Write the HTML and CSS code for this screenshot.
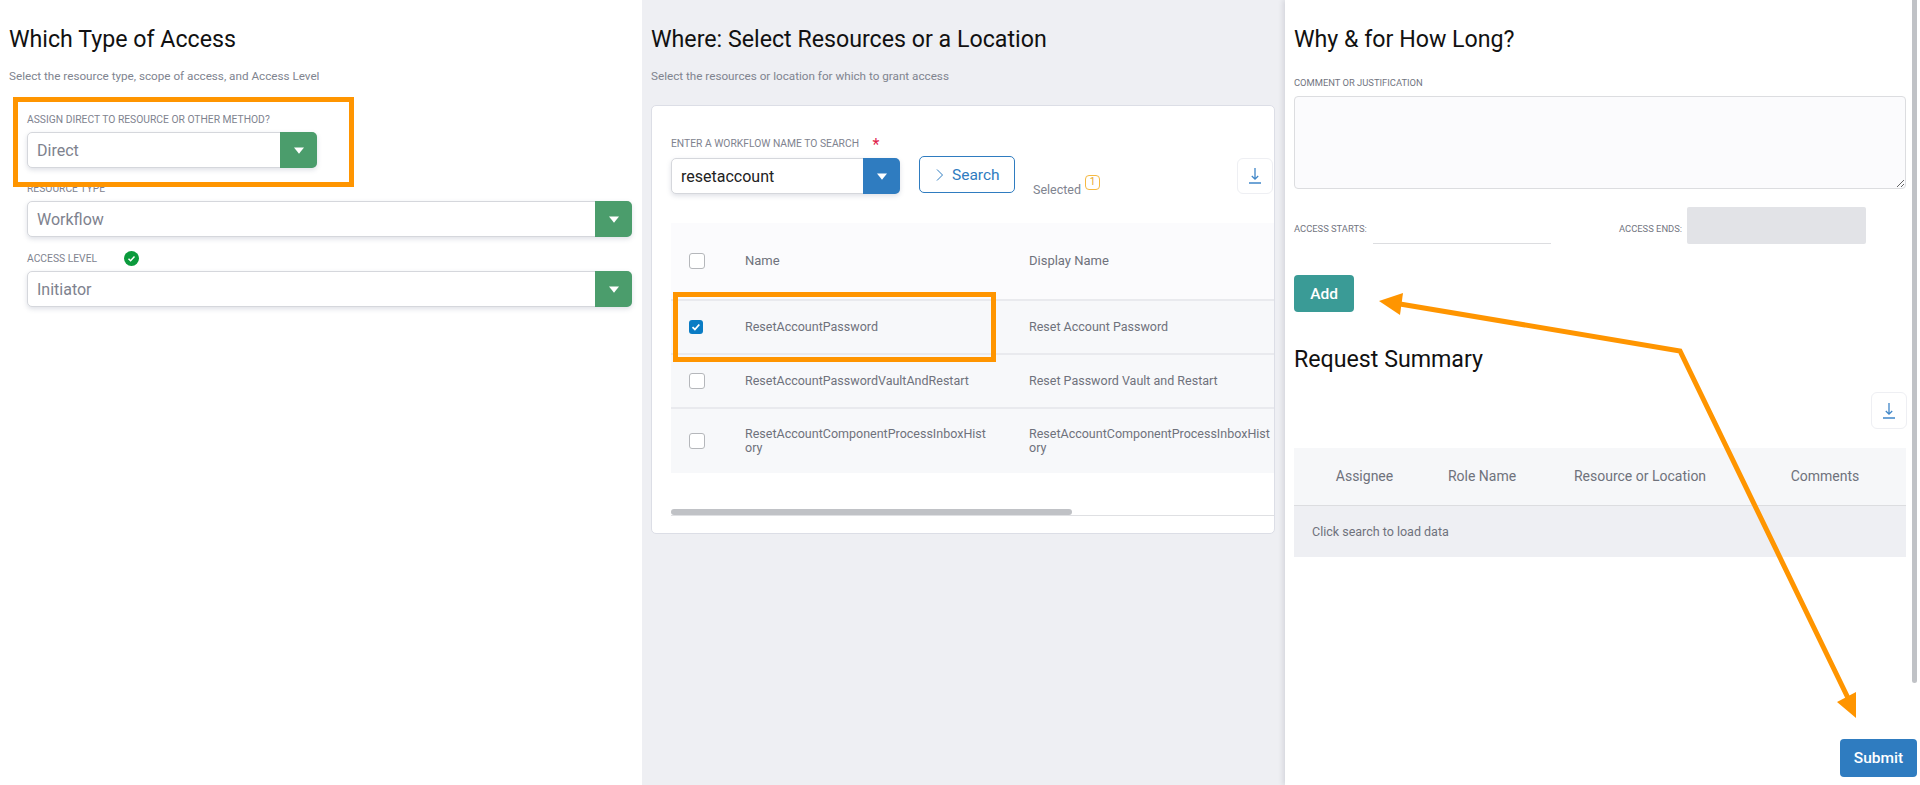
FILE: index.html
```html
<!DOCTYPE html>
<html lang="en">
<head>
    <meta charset="UTF-8">
    <meta name="viewport" content="width=device-width, initial-scale=1.0">
    <title>Request Access</title>
    <link rel="stylesheet" href="styles.css">
</head>
<body>
    <div class="page">
        <section class="panel panel-type">
            <h1>Which Type of Access</h1>
            <p class="subtitle">Select the resource type, scope of access, and Access Level</p>
            <div class="type-form">
                <div class="form-group">
                    <div class="field-label">ASSIGN DIRECT TO RESOURCE OR OTHER METHOD?</div>
                    <div class="select select-short">
                        <div class="select-value">Direct</div>
                        <div class="select-arrow green">
                            <svg width="10" height="7" viewBox="0 0 10 7"><path d="M0 0.5h10L5 6.8z" fill="#fff"/></svg>
                        </div>
                    </div>
                </div>
                <div class="form-group">
                    <div class="field-label">RESOURCE TYPE</div>
                    <div class="select">
                        <div class="select-value">Workflow</div>
                        <div class="select-arrow green">
                            <svg width="10" height="7" viewBox="0 0 10 7"><path d="M0 0.5h10L5 6.8z" fill="#fff"/></svg>
                        </div>
                    </div>
                </div>
                <div class="form-group">
                    <div class="field-label label-with-icon">
                        ACCESS LEVEL
                        <svg class="ok-icon" width="15" height="15" viewBox="0 0 15 15">
                            <circle cx="7.5" cy="7.5" r="7.5" fill="#0b9a3c"/>
                            <path d="M4.5 7.8l2.1 2 3.9-4.2" fill="none" stroke="#fff" stroke-width="1.5"/>
                        </svg>
                    </div>
                    <div class="select">
                        <div class="select-value">Initiator</div>
                        <div class="select-arrow green">
                            <svg width="10" height="7" viewBox="0 0 10 7"><path d="M0 0.5h10L5 6.8z" fill="#fff"/></svg>
                        </div>
                    </div>
                </div>
            </div>
        </section>

        <section class="panel panel-where">
            <h1>Where: Select Resources or a Location</h1>
            <p class="subtitle">Select the resources or location for which to grant access</p>
            <div class="card">
                <div class="toolbar">
                    <div class="search-field">
                        <div class="field-label">ENTER A WORKFLOW NAME TO SEARCH <span class="required">*</span></div>
                        <div class="select">
                            <div class="select-value dark">resetaccount</div>
                            <div class="select-arrow blue">
                                <svg width="10" height="7" viewBox="0 0 10 7"><path d="M0 0.5h10L5 6.8z" fill="#fff"/></svg>
                            </div>
                        </div>
                    </div>
                    <button class="btn-search">
                        <svg width="8" height="12" viewBox="0 0 8 12"><path d="M1 0.5L6.5 6L1 11.5" fill="none" stroke="#2f7cc0" stroke-width="1"/></svg>
                        Search
                    </button>
                    <div class="selected">Selected <span class="badge">1</span></div>
                    <button class="btn-download">
                        <svg width="12" height="16" viewBox="0 0 12 16"><path d="M6 0v11M2.8 8L6 11.2L9.2 8" fill="none" stroke="#3f86c8" stroke-width="1.3"/><path d="M0 15h12" stroke="#3f86c8" stroke-width="1.5"/></svg>
                    </button>
                </div>
                <div class="table-wrap">
                    <table class="results">
                        <thead>
                            <tr>
                                <th class="col-check"><span class="checkbox"></span></th>
                                <th class="col-name">Name</th>
                                <th class="col-name">Display Name</th>
                            </tr>
                        </thead>
                        <tbody>
                            <tr class="row-short">
                                <td><span class="checkbox checked">
                                    <svg width="10" height="8" viewBox="0 0 10 8"><path d="M1.5 4.2l2.4 2.3 4.4-5" fill="none" stroke="#fff" stroke-width="1.8"/></svg>
                                </span></td>
                                <td>ResetAccountPassword</td>
                                <td>Reset Account Password</td>
                            </tr>
                            <tr class="row-short">
                                <td><span class="checkbox"></span></td>
                                <td>ResetAccountPasswordVaultAndRestart</td>
                                <td>Reset Password Vault and Restart</td>
                            </tr>
                            <tr class="row-tall">
                                <td><span class="checkbox"></span></td>
                                <td>ResetAccountComponentProcessInboxHistory</td>
                                <td>ResetAccountComponentProcessInboxHistory</td>
                            </tr>
                        </tbody>
                    </table>
                </div>
                <div class="hscroll"><div class="hscroll-thumb"></div></div>
            </div>
        </section>

        <section class="panel panel-why">
            <h1>Why &amp; for How Long?</h1>
            <div class="small-label comment-label">COMMENT OR JUSTIFICATION</div>
            <textarea class="comment"></textarea>
            <div class="date-row">
                <span class="small-label">ACCESS STARTS:</span>
                <div class="date-input"></div>
                <span class="small-label ends-label">ACCESS ENDS:</span>
                <div class="date-disabled"></div>
            </div>
            <button class="btn-add">Add</button>
            <h1 class="summary-title">Request Summary</h1>
            <button class="btn-download summary-download">
                <svg width="12" height="16" viewBox="0 0 12 16"><path d="M6 0v11M2.8 8L6 11.2L9.2 8" fill="none" stroke="#3f86c8" stroke-width="1.3"/><path d="M0 15h12" stroke="#3f86c8" stroke-width="1.5"/></svg>
            </button>
            <table class="summary">
                <thead>
                    <tr>
                        <th class="col-assignee">Assignee</th>
                        <th class="col-role">Role Name</th>
                        <th class="col-resource">Resource or Location</th>
                        <th class="col-comments">Comments</th>
                    </tr>
                </thead>
                <tbody>
                    <tr><td colspan="4">Click search to load data</td></tr>
                </tbody>
            </table>
            <button class="btn-submit">Submit</button>
            <div class="vscroll"></div>
        </section>

        <!-- orange callouts drawn on top of the screenshot -->
        <div class="callout callout-direct"></div>
        <div class="callout callout-row"></div>
        <svg class="arrows" width="1920" height="785" viewBox="0 0 1920 785">
            <path d="M1400 304L1680 351L1848 698" fill="none" stroke="#ff9500" stroke-width="5"/>
            <path d="M1379 301L1403 293L1400 315z" fill="#ff9500"/>
            <path d="M1856 718L1837 702L1856 692z" fill="#ff9500"/>
        </svg>
    </div>
</body>
</html>
```

FILE: styles.css
```css
* {
    box-sizing: border-box;
}
body {
    margin: 0;
    font-family: Roboto, "Liberation Sans", sans-serif;
    background-color: white;
}
.page {
    position: relative;
    display: flex;
    width: 1920px;
    height: 785px;
    overflow: hidden;
}
.panel {
    position: relative;
    display: flex;
    flex-direction: column;
    height: 100%;
    padding-top: 25px;
}
.panel-type {
    width: 642px;
    padding-left: 9px;
    padding-right: 10px;
}
.panel-where {
    width: 643px;
    padding-left: 9px;
    padding-right: 9px;
    background-color: #eeeff3;
}
.panel-why {
    width: 635px;
    padding-left: 9px;
    padding-right: 13px;
    padding-bottom: 8px;
    box-shadow: -2px 0 5px rgba(60, 60, 80, 0.14);
}
h1 {
    margin: 0;
    font-size: 23.2px;
    line-height: 28px;
    font-weight: 400;
    color: #111;
}
.subtitle {
    margin: 15px 0 0;
    font-size: 11.7px;
    line-height: 16px;
    color: #80848f;
}

/* fields */
.type-form {
    margin: 29px 0 0 18px;
}
.form-group {
    margin-bottom: 14px;
}
.field-label {
    margin-bottom: 5px;
    font-size: 10.3px;
    line-height: 14px;
    color: #80838f;
}
.label-with-icon {
    display: flex;
    align-items: center;
    height: 15px;
}
.ok-icon {
    margin-left: 27px;
}
.required {
    position: relative;
    top: 3px;
    margin-left: 11px;
    color: #e0204a;
    font-size: 16px;
    line-height: 0;
}
.select {
    display: flex;
    height: 36px;
    background-color: white;
    border: 1px solid #d5d7dc;
    border-radius: 5px;
    box-shadow: 0 2px 5px rgba(90, 100, 130, 0.2);
}
.select-short {
    width: 290px;
}
.select-value {
    flex: 1;
    padding-left: 9px;
    font-size: 16px;
    line-height: 36px;
    color: #7e828e;
}
.select-value.dark {
    color: #222;
}
.select-arrow {
    display: flex;
    align-items: center;
    justify-content: center;
    width: 37px;
    margin: -1px -1px -1px 0;
    border-radius: 0 5px 5px 0;
}
.green {
    background-color: #4b9d6c;
}
.blue {
    background-color: #2f7cc0;
}

/* resources card */
.card {
    margin-top: 21px;
    width: 624px;
    height: 429px;
    padding-top: 31px;
    padding-left: 19px;
    background-color: white;
    border: 1px solid #dcdee6;
    border-radius: 5px;
}
.toolbar {
    display: flex;
    align-items: flex-end;
}
.search-field {
    width: 229px;
}
.search-field .field-label {
    margin-bottom: 7px;
}
.btn-search {
    display: flex;
    align-items: center;
    gap: 8px;
    width: 96px;
    height: 37px;
    margin: 0 0 1px 19px;
    padding: 0 0 0 16px;
    background-color: white;
    border: 1px solid #2f7cc0;
    border-radius: 5px;
    color: #2f7cc0;
    font-family: inherit;
    font-size: 15.5px;
}
.selected {
    margin: 0 0 -5px 18px;
    font-size: 12.5px;
    line-height: 16px;
    color: #80848f;
    white-space: nowrap;
}
.badge {
    display: inline-block;
    position: relative;
    top: -9px;
    width: 15px;
    height: 15px;
    margin-left: 1px;
    border: 1.5px solid #f5b942;
    border-radius: 4px;
    color: #e5a52a;
    font-size: 10px;
    line-height: 12px;
    text-align: center;
}
.btn-download {
    display: flex;
    align-items: center;
    justify-content: center;
    width: 36px;
    height: 36px;
    margin-left: auto;
    margin-right: 1px;
    padding: 0;
    background-color: white;
    border: 1px solid #eeeff3;
    border-radius: 6px;
}
.table-wrap {
    margin-top: 29px;
    overflow: hidden;
}
.results {
    width: 642px;
    table-layout: fixed;
    border-collapse: collapse;
    color: #6f727c;
    font-size: 12.5px;
    line-height: 14px;
}
.results th {
    height: 77px;
    padding: 0 38px 0 0;
    background-color: #fbfbfd;
    border-bottom: 2px solid #e9eaee;
    font-size: 13px;
    font-weight: 400;
    text-align: left;
}
.results td {
    padding: 0 38px 0 0;
    background-color: #f7f8fa;
    border-bottom: 2px solid #e9eaee;
    word-break: break-all;
}
.results tr:last-child td {
    border-bottom: none;
}
.results .col-check {
    width: 74px;
    padding-left: 18px;
}
.results .col-name {
    width: 284px;
}
.results td:first-child {
    padding-left: 18px;
}
.row-short {
    height: 54px;
}
.row-tall {
    height: 65px;
}
.checkbox {
    display: block;
    width: 16px;
    height: 16px;
    background-color: white;
    border: 1px solid #b5b7bb;
    border-radius: 3px;
}
.checkbox.checked {
    display: flex;
    align-items: center;
    justify-content: center;
    width: 14px;
    height: 14px;
    background-color: #0a7cc4;
    border: none;
}
.hscroll {
    height: 7px;
    margin-top: 36px;
    border-bottom: 1px solid #dfe0e3;
}
.hscroll-thumb {
    width: 401px;
    height: 6px;
    background-color: #c0c2c6;
    border-radius: 3px;
}

/* why panel */
.small-label {
    font-size: 9.4px;
    line-height: 14px;
    color: #72757f;
    white-space: nowrap;
}
.comment-label {
    margin-top: 23px;
}
.comment {
    display: block;
    width: 612px;
    height: 93px;
    margin-top: 6px;
    background-color: #fbfbfd;
    border: 1px solid #dcdde0;
    border-radius: 4px;
}
.date-row {
    display: flex;
    align-items: center;
    gap: 4px;
    width: 612px;
    height: 37px;
    margin-top: 18px;
}
.date-row .small-label {
    padding-top: 7px;
    width: 74px;
}
.date-row .ends-label {
    width: 64px;
    margin-left: 64px;
}
.date-input {
    width: 178px;
    height: 37px;
    margin-left: 1px;
    border-bottom: 1px solid #dcdde0;
}
.date-disabled {
    width: 179px;
    height: 37px;
    background-color: #e2e3e7;
    border-radius: 2px;
}
.btn-add {
    width: 60px;
    height: 37px;
    margin-top: 31px;
    background-color: #3a9b96;
    border: none;
    border-radius: 4px;
    color: white;
    font-family: inherit;
    font-size: 15.5px;
    font-weight: 500;
}
.summary-title {
    margin-top: 33px;
}
.summary-download {
    flex: none;
    height: 37px;
    margin-top: 19px;
    margin-right: 0;
}
.summary {
    width: 612px;
    margin-top: 19px;
    table-layout: fixed;
    border-collapse: collapse;
    color: #6f727c;
}
.summary th {
    height: 57px;
    padding: 0;
    background-color: #f6f7f9;
    border-bottom: 1px solid #dcdde0;
    font-size: 14px;
    font-weight: 400;
    text-align: center;
}
.col-assignee {
    width: 141px;
}
.col-role {
    width: 94px;
}
.col-resource {
    width: 222px;
}
.col-comments {
    padding-right: 7px !important;
}
.summary td {
    height: 52px;
    padding-left: 18px;
    background-color: #eeeff3;
    font-size: 12.5px;
}
.btn-submit {
    width: 77px;
    height: 38px;
    margin-top: auto;
    margin-right: -10px;
    align-self: flex-end;
    background-color: #2f7cc0;
    border: none;
    border-radius: 4px;
    color: white;
    font-family: inherit;
    font-size: 15.5px;
    font-weight: 500;
}
.vscroll {
    position: absolute;
    top: 0;
    right: 3px;
    width: 5px;
    height: 683px;
    background-color: #c0c2c6;
    border-radius: 0 0 3px 3px;
}

/* annotations */
.callout {
    position: absolute;
    border: 5px solid #ff9500;
}
.callout-direct {
    left: 13px;
    top: 97px;
    width: 341px;
    height: 90px;
}
.callout-row {
    left: 673px;
    top: 292px;
    width: 323px;
    height: 70px;
}
.arrows {
    position: absolute;
    left: 0;
    top: 0;
    pointer-events: none;
}
```
